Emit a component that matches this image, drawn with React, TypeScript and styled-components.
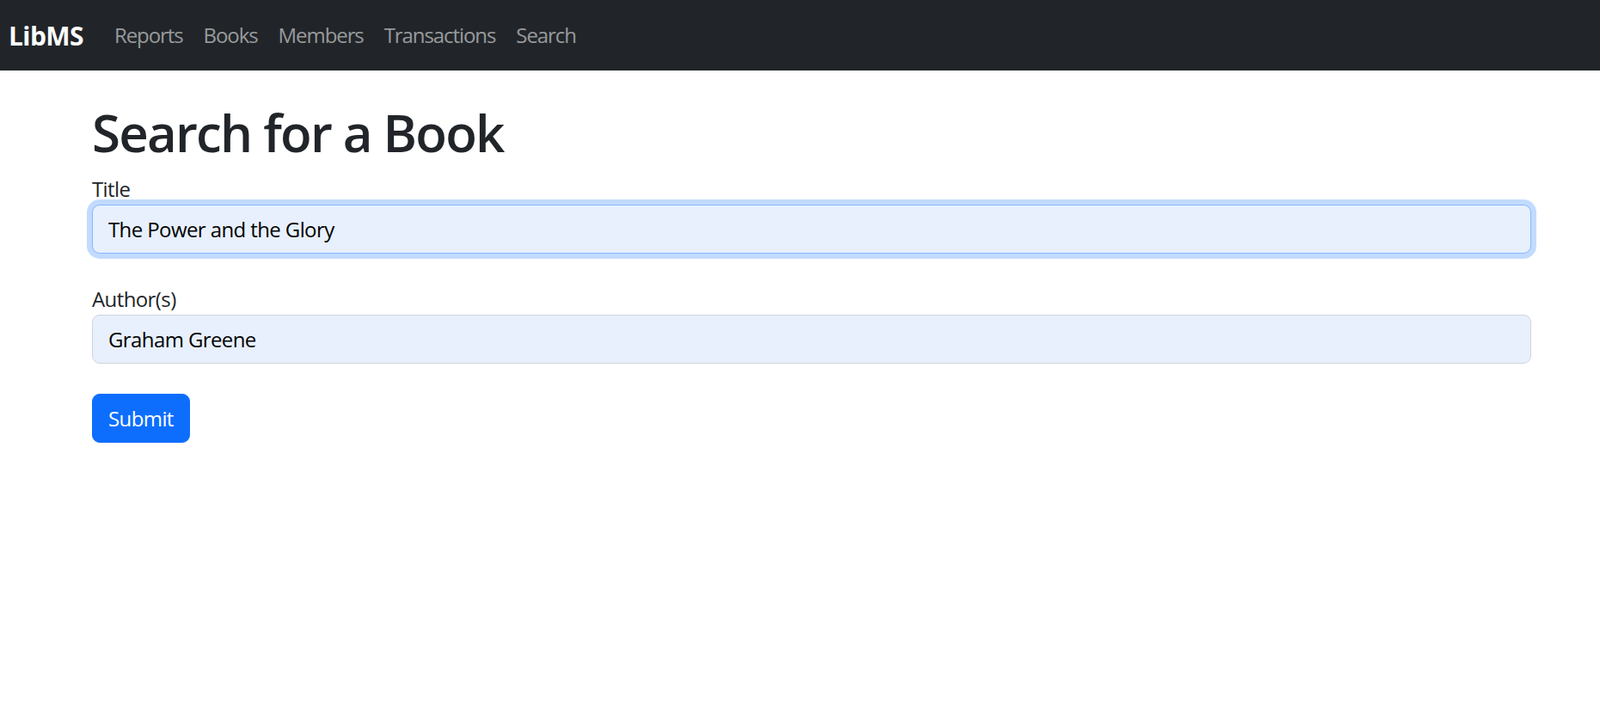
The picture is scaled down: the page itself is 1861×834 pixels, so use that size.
import React from "react"
import styled, { createGlobalStyle } from "styled-components"

const GlobalStyle = createGlobalStyle`
  body {
    margin: 0;
    font-family: "Open Sans", "Noto Sans", sans-serif;
    font-size: 24px;
    line-height: 1.5;
    letter-spacing: -0.025em;
    color: #212529;
    background: #fff;
  }
  * {
    box-sizing: border-box;
  }
`

const navLinks = ["Reports", "Books", "Members", "Transactions", "Search"]

const Navbar = styled.nav`
  display: flex;
  align-items: center;
  height: 82px;
  padding: 0 10px;
  background: #212529;
`

const Brand = styled.a`
  margin-right: 24px;
  padding: 7px 0;
  font-size: 30px;
  font-weight: 700;
  color: #fff;
  text-decoration: none;
`

const NavList = styled.div`
  display: flex;
`

const NavLink = styled.a`
  padding: 12px;
  color: rgba(255, 255, 255, 0.55);
  letter-spacing: -0.045em;
  text-decoration: none;
`

const Container = styled.main`
  width: 1674px;
  margin: 36px 0 0 107px;
`

const Heading = styled.h1`
  margin: 0 0 12px;
  font-size: 60px;
  font-weight: 600;
  line-height: 1.2;
  letter-spacing: -0.03em;
`

const Field = styled.div`
  margin-bottom: 35px;
`

const Label = styled.label`
  display: block;
`

const Input = styled.input<{ $focused?: boolean }>`
  display: block;
  width: 100%;
  height: 57px;
  padding: 9px 18px;
  font: inherit;
  letter-spacing: inherit;
  color: #000;
  background: #e8f0fe;
  border: 1.5px solid ${p => (p.$focused ? "#86b7fe" : "#ced4da")};
  border-radius: 9px;
  outline: none;
  box-shadow: ${p => (p.$focused ? "0 0 0 6px rgba(13, 110, 253, 0.25)" : "none")};
`

const Button = styled.button`
  height: 57px;
  padding: 9px 18px;
  font: inherit;
  letter-spacing: inherit;
  color: #fff;
  background: #0d6efd;
  border: 1.5px solid #0d6efd;
  border-radius: 9px;
`

export default function App() {
  return (
    <>
      <GlobalStyle />
      <Navbar>
        <Brand href="#">LibMS</Brand>
        <NavList>
          {navLinks.map(link => (
            <NavLink key={link} href="#">
              {link}
            </NavLink>
          ))}
        </NavList>
      </Navbar>
      <Container>
        <Heading>Search for a Book</Heading>
        <Field>
          <Label htmlFor="title">Title</Label>
          <Input id="title" $focused defaultValue="The Power and the Glory" />
        </Field>
        <Field>
          <Label htmlFor="authors">Author(s)</Label>
          <Input id="authors" defaultValue="Graham Greene" />
        </Field>
        <Button type="submit">Submit</Button>
      </Container>
    </>
  )
}
